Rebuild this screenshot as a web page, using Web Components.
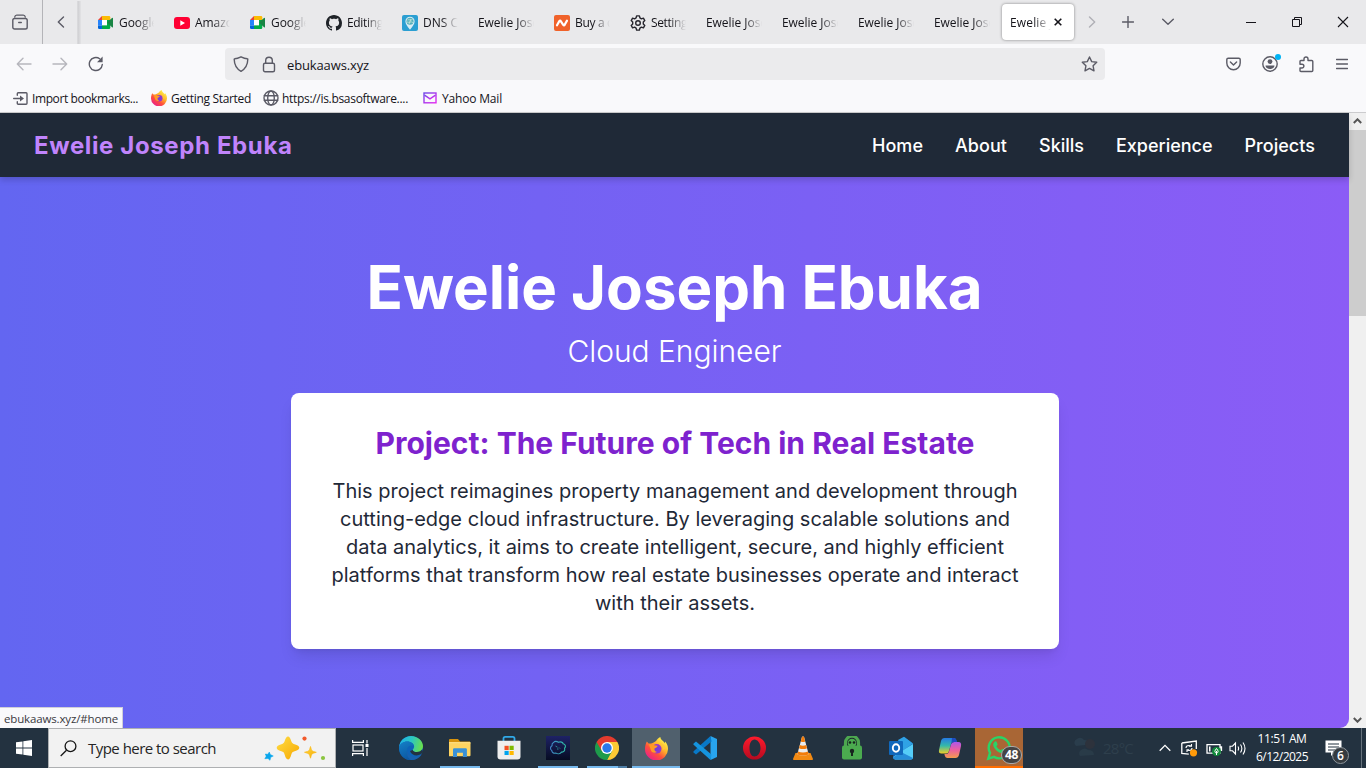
<!DOCTYPE html>
<html lang="en">
<head>
<meta charset="utf-8">
<title>Ewelie Joseph Ebuka</title>
<style>
html,body{margin:0;height:100%;overflow:hidden}
body{font-family:"Open Sans","Noto Sans",sans-serif}
</style>
</head>
<body>
<desktop-screen></desktop-screen>
<script>
const define=(name,html,init)=>{
  const t=document.createElement('template');
  t.innerHTML=html;
  customElements.define(name,class extends HTMLElement{
    constructor(){super();this.attachShadow({mode:'open'}).append(t.content.cloneNode(true));}
    connectedCallback(){if(init)init.call(this,this.shadowRoot);}
  });
};

/* Icons, each as [width, height, markup]. */
const S='fill="none" stroke="#5b5b66" stroke-width="1.4" stroke-linecap="round" stroke-linejoin="round"';
const K='fill="none" stroke="#15141a"';
const ICONS={
 archive:[16,16,`<g ${S}><path d="M2.700 3.200q.3-2 2-2h6.600q1.700 0 2 2" stroke-width="1.300"/><rect x=".8" y="4.500" width="14.400" height="10.500" rx="1.800"/><path d="M6.700 8.500h2.600"/></g>`],
 left:[8,12,`<path d="M6.500 1 1.300 6l5.200 5" ${S}/>`],
 rightdim:[8,12,`<path d="M1.500 1 6.700 6l-5.200 5" ${S} opacity=".4"/>`],
 plus:[12,12,`<path d="M6 .5v11M.5 6h11" ${S}/>`],
 down:[12,8,`<path d="M.7 1.200 6 6.300l5.300-5.100" ${S}/>`],
 min:[10,10,`<path d="M0 5.500h10" ${K}/>`],
 max:[12,12,`<path d="M1.500 3.500h7v7h-7zM3.500 3V1.500h7v7H9" ${K}/>`],
 close:[12,12,`<path d="m1 1 10 10M11 1 1 11" ${K} stroke-width="1.100"/>`],
 tabx:[8,8,`<path d="m.7.7 6.600 6.600M7.300.7.7 7.300" ${K} stroke-width="1.600"/>`],
 back:[16,14,`<path d="M15 7H1.500M7 1.300 1.300 7 7 12.700" ${S} opacity=".42"/>`],
 fwd:[16,14,`<path d="M1 7h13.500M9 1.300 14.700 7 9 12.700" ${S} opacity=".42"/>`],
 reload:[16,16,`<path d="M14.300 8.500A6.500 6.500 0 1 1 11.700 2.800" ${S} stroke-width="1.500"/><path d="M14.600.5v5.700H9z" fill="#5b5b66"/>`],
 shield:[16,16,`<path d="M8 .8c2.500 1.200 4.600 1.800 6.300 1.900.3 0 .5.300.5.600-.1 5.500-1.600 9.200-6.800 12C2.800 12.500 1.300 8.800 1.200 3.300c0-.3.200-.6.500-.6C3.400 2.600 5.500 2 8 .8z" ${S} />`],
 lock:[14,17,`<g ${S}><rect x="1.500" y="7.200" width="11" height="8.600" rx="1.500"/><path d="M3.700 7V4.500a3.300 3.300 0 0 1 6.600 0V7"/></g>`],
 star:[17,16,`<path d="m8.500 1 2.200 4.600 5 .7-3.600 3.500.9 5-4.500-2.400L4 14.800l.9-5L1.300 6.300l5-.7z" ${S}/>`],
 pocket:[15,14,`<g ${S}><path d="M2.200 1.200h10.600q1.400 0 1.400 1.400V6a6.700 6.700 0 0 1-13.400 0V2.600q0-1.400 1.400-1.400z"/><path d="m4.400 5 3.100 3 3.100-3"/></g>`],
 account:[20,20,`<circle cx="9" cy="11" r="7.200" ${S}/><circle cx="9" cy="8.600" r="2.400" fill="#5b5b66"/><path d="M4.500 12.600h9c0 2-2 3.500-4.500 3.500s-4.500-1.500-4.500-3.500z" fill="#5b5b66"/><circle cx="17" cy="4" r="3" fill="#00b3f4"/>`],
 puzzle:[15,17,`<path d="M5 4.500V3a2 2 0 0 1 4 0v1.500h3.800q1 0 1 1v9q0 1-1 1H2q-1 0-1-1V12h2a1.900 1.900 0 0 0 0-3.800H1V5.500q0-1 1-1z" ${S}/>`],
 menu:[12,12,`<path d="M.5 1.500h11M.5 6h11M.5 10.500h11" ${S} stroke-width="1.200"/>`],
 meet:[16,13,`<path d="M4 0h7q1.300 0 1.300 1.300V4H4z" fill="#fbbc04"/><path d="M4 0v4H0z" fill="#ea4335"/><path d="M0 4h4v5.500H0z" fill="#2684fc"/><path d="M0 9.400h4V13H1.300Q0 13 0 11.700z" fill="#0066da"/><path d="M4 9.200h5V4h3.300v7.700q0 1.300-1.300 1.300H4z" fill="#00ac47"/><path d="m9 6.500 5-4.500q1-.8 1 .4v8.400q0 1.200-1 .4z" fill="#198544"/><path d="M4 4h5v5.200H4z" fill="#fff"/>`],
 youtube:[16,12,`<rect width="16" height="12" rx="3" fill="#ff0033"/><path d="M6.300 3.300v5.400L11 6z" fill="#fff"/>`],
 github:[16,16,`<path fill="#1f2328" d="M8 0C3.580 0 0 3.580 0 8c0 3.540 2.290 6.530 5.470 7.590.4.070.55-.17.55-.38 0-.19-.01-.82-.01-1.490-2.010.37-2.530-.49-2.690-.94-.09-.23-.48-.94-.82-1.130-.28-.15-.68-.52-.01-.53.63-.01 1.080.58 1.230.82.72 1.210 1.870.87 2.330.66.070-.52.28-.87.51-1.070-1.780-.2-3.640-.89-3.640-3.950 0-.87.31-1.590.82-2.150-.08-.2-.36-1.020.08-2.120 0 0 .67-.21 2.200.82.64-.18 1.320-.27 2-.27s1.360.09 2 .27c1.530-1.040 2.200-.82 2.200-.82.44 1.100.16 1.920.08 2.120.51.56.82 1.270.82 2.150 0 3.070-1.870 3.750-3.650 3.950.29.25.54.73.54 1.480 0 1.070-.01 1.930-.01 2.200 0 .21.15.46.55.38A8 8 0 0 0 16 8c0-4.420-3.580-8-8-8z"/>`],
 dns:[16,16,`<rect width="16" height="16" rx="2" fill="#2b9fd2"/><path d="M8 14.700C5 11 3.400 9 3.400 6.300a4.600 4.600 0 0 1 9.200 0C12.600 9 11 11 8 14.700z" fill="#d9edf4"/><circle cx="8" cy="6.300" r="3.500" fill="#54aebb"/><path d="M5.500 5c2-1 3 1 5-.5M5 7c2 1 4-1 6 .500M7 9l2-5" stroke="#c7e7d9" fill="none" stroke-width=".8"/>`],
 namecheap:[16,16,`<rect width="16" height="16" rx="2" fill="#f0622a"/><path d="M3 10.300 5.300 6.100q.8-1 1.600.2l2.300 3.600q.8 1 1.500-.1L13 5.600" fill="none" stroke="#fff" stroke-width="2.200" stroke-linecap="round"/>`],
 gear:[16,16,`<g fill="none" stroke="#26252d" stroke-width="1.400" stroke-linejoin="round"><circle cx="8" cy="8" r="2.300"/><path d="m6.600.9-.5 2-1.500.9-2-.6-1.400 2.400L2.700 7v2l-1.500 1.400 1.400 2.400 2-.6 1.500.9.500 2h2.800l.5-2 1.500-.9 2 .6 1.400-2.400L13.300 9V7l1.500-1.400-1.400-2.400-2 .6-1.500-.9-.5-2z"/></g>`],
 import:[15,13,`<g ${S} stroke-width="1.500"><path d="M4.300 3.300V1.700q0-.9.900-.9h7.900q.9 0 .9.900v9.600q0 .9-.9.900H5.200q-.9 0-.9-.9V9.700"/><path d="M.7 6.500h8"/></g><path d="M7 3.500v6l4-3z" fill="#5b5b66"/>`],
 globe:[16,16,`<g ${S} stroke-width="1.200"><circle cx="8" cy="8" r="7"/><ellipse cx="8" cy="8" rx="3.300" ry="7"/><path d="M1.300 5.700h13.400M1.300 10.300h13.400"/></g>`],
 mail:[14,12,`<defs><linearGradient id="m" x2="1" y2="1"><stop stop-color="#7048e8"/><stop offset="1" stop-color="#e42bf0"/></linearGradient></defs><g fill="none" stroke="url(#m)" stroke-width="1.400"><rect x="1" y="1" width="12" height="9.800"/><path d="m1.500 3.200 5.500 3.600 5.500-3.600"/></g>`],
 firefox:[16,16,`<defs><linearGradient id="a" x1=".85" y1=".1" x2=".2" y2=".95"><stop stop-color="#fff44f"/><stop offset=".35" stop-color="#ffb52a"/><stop offset=".65" stop-color="#ff4f3b"/><stop offset="1" stop-color="#e91e8c"/></linearGradient><radialGradient id="b"><stop stop-color="#6b42d9"/><stop offset="1" stop-color="#9a35cc"/></radialGradient></defs><path d="M1.300 3.200 2.500 4.600 4.200 4.500C5.600 4 7.200 3.400 7.800 2.600 8.300 1.600 9.300.7 10.700 0c0 1.800 2 2.600 3.100 4.300l.2-1.200C15.400 4.700 16 6.300 16 8.200A8 8 0 0 1 0 8.500C0 6.500.5 4.500 1.300 3.200z" fill="url(#a)"/><circle cx="8.200" cy="8.200" r="3.300" fill="url(#b)"/><path d="M2.800 5.300c1.600-.6 2.700-.2 3.700.500l2.300.2c-.3 1.200-1.300 1.400-2.100 1.900-.5 1.500.4 2.500 1.600 2.500-2 1.400-4-.1-4.300-1.600z" fill="#ff9b24"/><path d="M10 4c2 1 2.900 3 2.200 5l1.700-.8C14 6 12.500 4.500 10 4z" fill="#ffc63a"/>`],
 windows:[16,16,`<path d="M0 2.300 6.500 1.400v6.200H0zM7.300 1.200 16 0v7.600H7.300zM0 8.400h6.500v6.200L0 13.700zM7.300 8.400H16V16l-8.700-1.200z" fill="#fff"/>`],
 search:[17,17,`<g fill="none" stroke="#161616" stroke-width="1.300"><circle cx="10.500" cy="6.200" r="5.400"/><path d="m6.500 10.200-5.800 5.800"/></g>`],
 sparkles:[62,26,`<defs><linearGradient id="s" x2="1" y2="1"><stop stop-color="#ffdd46"/><stop offset="1" stop-color="#f6a800"/></linearGradient></defs><path d="M24 1.500c1.400 0 2.400 1.500 3.300 4.800.5 1.700 1.300 2.300 3.200 2.900 3.300 1 4.800 2.100 4.800 3.600s-1.500 2.500-4.700 3.500c-2 .6-2.700 1.300-3.300 3.200-.9 3.500-1.900 4.900-3.300 4.900s-2.500-1.500-3.400-4.900c-.5-1.900-1.200-2.600-3.200-3.200-3.300-1-4.700-2-4.700-3.500s1.500-2.600 4.700-3.600c2-.6 2.700-1.200 3.200-2.900.9-3.300 2-4.800 3.400-4.800z" fill="url(#s)"/><path d="M46.500 11.500q.9 3.800 1.500 4.300t4.300 1.500q-3.700 1-4.300 1.600t-1.500 4.300q-1-3.800-1.600-4.300T40.500 17.300q3.800-1 4.400-1.500t1.600-4.300z" fill="url(#s)" stroke="#fbb919" stroke-width=".7"/><path d="m5.300 17 1 2.500 3 1.500-2.600 1.300-.7 3-2-1.800-3.200.2 1.400-2.500-.9-2.200 2.500.300z" fill="#0aa6ec" stroke="#0aa6ec" stroke-width=".5"/><circle cx="40.500" cy="3.600" r="2.100" fill="#f25a2b"/><circle cx="59" cy="23" r="2.100" fill="#8bc53f"/>`],
 taskview:[17,16,`<g fill="none" stroke="#fff" stroke-width="1.200"><rect x="1" y="5" width="10" height="6"/><path d="M.6 0v2.400h10.800V0M.6 16v-2.400h10.800V16M15 0v3.500M15 8v8"/></g><path d="M13.500 4h3v3h-3z" fill="#fff"/>`],
 edge:[24,24,`<defs><linearGradient id="e" x1="0" x2="1" y1=".3" y2=".5"><stop stop-color="#1eb0e9"/><stop offset=".5" stop-color="#2cc7c1"/><stop offset="1" stop-color="#69e04c"/></linearGradient><linearGradient id="f" y2="1" x2=".4"><stop stop-color="#1480c7"/><stop offset="1" stop-color="#0c59a4"/></linearGradient></defs><circle cx="12" cy="12" r="12" fill="#0d63b8"/><path d="M0 11.500C.5 5 5.500 0 12 0c7 0 12 5.200 12 10 0 4-2.900 6-6.200 6-2.300 0-4-.9-4-2.100 0-.9 1.300-1.200 1.300-3.400 0-2.500-3-5-6.800-5C4 5.500 1 8 0 11.500z" fill="url(#e)"/><path d="M0 11.500C1 7.500 4.500 5.500 8.300 5.500c3.800 0 6.800 2.500 6.800 5-5-3-8 1.500-6.900 5.600C9.300 20 12.300 22 15 23.600 6 26 0 19 0 11.500z" fill="url(#f)"/><path d="M8.200 14.500c.3 4 4 6 7.300 6 3 0 5-1.200 6.200-2.100.5-.3.900.2.600.6A12 12 0 0 1 12 24c-2-1-5-4.500-3.800-9.500z" fill="#1761ae"/><path d="M13.800 13.900c0 1.200 1.700 2.100 4 2.100 2.200 0 4.200-.8 5.300-2.500L24 16l-2 2c-3 2.400-9.500 2-11-3z" fill="#233340"/>`],
 explorer:[22,20,`<path d="M1 1h8l2 2.500h10V10H0V2q0-1 1-1z" fill="#d8930c"/><path d="M0 4.200h20.500q1 0 1 1v12q0 1-1 1H0z" fill="#ffd461"/><path d="M4 19v-7.500q0-1.200 1.200-1.200h11.500q1.200 0 1.200 1.200V19h-4v-4.300H8V19z" fill="#3a91d6"/><path d="M0 4.200h21.500v1H0z" fill="#ffe18b"/>`],
 store:[24,24,`<path d="M6.500 5V2.500q0-1.600 1.600-1.600h7.800q1.600 0 1.600 1.600V5" fill="none" stroke="#31a9e8" stroke-width="1.800"/><path d="M.5 4.800h23v15.700q0 3-3 3h-17q-3 0-3-3z" fill="#eee"/><path d="M7.500 9.800h4.200V14H7.500z" fill="#f25022"/><path d="M12.500 9.800h4.200V14h-4.200z" fill="#7fba00"/><path d="M7.500 14.900h4.200V19H7.500z" fill="#00a4ef"/><path d="M12.500 14.900h4.200V19h-4.200z" fill="#ffb900"/>`],
 cloud:[24,24,`<defs><linearGradient id="c" y2="1" x2="0"><stop stop-color="#1e2266"/><stop offset="1" stop-color="#060c22"/></linearGradient><linearGradient id="g" x2="1"><stop stop-color="#4385ca"/><stop offset="1" stop-color="#2dc0a6"/></linearGradient></defs><path d="M0 0h24v24H0z" fill="url(#c)"/><path d="M7.500 6.500c1.500-1.700 3.500-1.200 5-.2 2-1 4.500 0 4.600 1.500 2.500.4 3 3 1.500 4.300.7 2.700-1 4.300-3.100 4-1.500 2-4 2-5.500 1-2.500.6-4.200-.700-4.200-2.500-2.200-1.500-1.300-4 .2-4.800-.2-1.500.3-2.700 1.500-3.300z" fill="none" stroke="url(#g)" stroke-width="1.100"/><path d="m9.500 10 2 1.200M13 11.500l1 1M11 13h1.500" stroke="#2c8e94"/>`],
 chrome:[24,24,`<path d="M12 12V6h10.400A12 12 0 0 1 12 24l4-9z" fill="#fcc934"/><path d="M12 12 1.600 6A12 12 0 0 0 12 24l5.200-9z" fill="#1e9b4b"/><path d="M1.600 6 6.800 15 12 6h10.400A12 12 0 0 0 1.600 6z" fill="#e33b2e"/><circle cx="12" cy="12" r="6" fill="#fff"/><circle cx="12" cy="12" r="4.700" fill="#2979ea"/>`],
 vscode:[24,24,`<path d="M17.500 0v24L24 21V3z" fill="#28a4ee"/><path d="m17.500 0 1 5.500L3 18.500l-2.400-2q-.6-.6 0-1.300z" fill="#0878c7"/><path d="M17.500 24 .6 8.700q-.6-.6 0-1.300L3 5.500l15.500 13z" fill="#1594de"/>`],
 opera:[23,24,`<defs><linearGradient id="o" y2="1" x2="0"><stop stop-color="#ff1b2d"/><stop offset="1" stop-color="#b60a1f"/></linearGradient></defs><path fill="url(#o)" fill-rule="evenodd" d="M11.500.5a11.500 11.500 0 1 1 0 23 11.500 11.500 0 0 1 0-23zM11.500 3.500C8.500 3.500 6.500 7 6.500 12s2 8.500 5 8.500 6-3.500 6-8.500-3-8.500-6-8.500z"/>`],
 vlc:[22,24,`<path d="M3.500 17h15L21 23q.2 1-1 1H2q-1.200 0-1-1z" fill="#f28a13"/><path d="M10 .8q1-.8 2 0l4.700 17.500c-1.800 1.700-9.600 1.700-11.400 0z" fill="#ececec"/><path d="m8.800 5.500 1.200-4.700q1-.8 2 0l1.200 4.700q-2.200 1.100-4.400 0zM7 12.200l.9-3.200q3.100 1.300 6.200 0l.9 3.200q-4 1.800-8 0zM5.300 18.200l.8-2.600q4.900 2 9.800 0l.8 2.600c-2 1.800-9.400 1.800-11.400 0z" fill="#f27c0a"/>`],
 ssh:[20,24,`<path d="M3.500 12V6.700a6.500 6.500 0 0 1 13 0V12" fill="#1b2a2c" stroke="#4da750" stroke-width="3.200"/><rect y="9.500" width="20" height="14" rx="2" fill="#4bab4f"/><circle cx="10" cy="7" r="4.300" fill="#4bab4f"/><circle cx="8" cy="6.500" r="1.300" fill="#17251f"/><circle cx="12" cy="6.500" r="1.300" fill="#17251f"/><circle cx="10" cy="15" r="2.200" fill="#17251f"/><path d="M9 15h2v5H9z" fill="#17251f"/>`],
 outlook:[26,24,`<path d="M6 8 16 .7 25 7.500v14q0 2-2 2H7q-2 0-2-2z" fill="#185da9"/><path d="m10 4 6-3.300 9 6.800-10 7z" fill="#2fa2e5"/><path d="M25 8v13.500q0 2-2 2H7L5 21l12-8z" fill="#55cdf8"/><path d="m13 16 12 6q-1 1.500-3 1.500H7q-2 0-2-2z" fill="#268dd8"/><rect x="1" y="5" width="14" height="14" rx="1" fill="#1068bc"/><ellipse cx="8" cy="12" rx="3.200" ry="3.700" fill="none" stroke="#fff" stroke-width="1.900"/>`],
 copilot:[24,24,`<defs><linearGradient id="p" y2="1" x2="0"><stop stop-color="#257ae5"/><stop offset=".5" stop-color="#34b9a9"/><stop offset="1" stop-color="#f1ce26"/></linearGradient><linearGradient id="q" y2="1" x2="0"><stop stop-color="#ad57ea"/><stop offset=".5" stop-color="#ed609e"/><stop offset="1" stop-color="#f59c4d"/></linearGradient></defs><path d="M6.500 2h9q2 0 2.600 2l.6 2h-3q-2 0-2.700 2l-2 7q-.7 2.500-3 2.500H3.500Q.3 17.500 1 14L3 5q.8-3 3.500-3z" fill="url(#p)"/><path d="M17.500 22h-8q-2 0-2.600-2l-.5-2H8q2.300 0 3-2.500l2-7Q13.700 6 16 6h4.500q3.200 0 2.500 4l-2 9q-.8 3-3.500 3z" fill="url(#q)"/><path d="M14 2h2q2 0 2.500 2l.5 2h-3q-2 0-2.700 1.500z" fill="#1d4cc2"/>`],
 whatsapp:[26,26,`<path d="M2.300 23.700 4 17.800A10.500 10.500 0 1 1 8 21.900z" fill="none" stroke="#2bd366" stroke-width="2.400"/><path d="M8.700 6.700c.8-.8 1.600-.6 1.900.2l1 2.300c.2.700-.9 1.500-1.200 2 1 2 2.600 3.200 4.500 4 .7-.5 1.400-1.700 2-1.400l2.500 1.200c.7 1-.8 3-2.800 3.100-5 0-11-6.500-9-10.200z" fill="#2bd366"/>`],
 chevup:[12,8,`<path d="m.7 6.700 5.300-5.300 5.300 5.300" fill="none" stroke="#fff" stroke-width="1.300"/>`],
 sync:[17,17,`<path d="M.8 3 15.300 1v8M.8 3v10.500l7 .7" fill="none" stroke="#fff" stroke-width="1.300"/><path d="M5 8q0-2.500 3-2.500l2.500.5M10.500 4v2.300H8M11 8q0 2.500-3 2.500l-2-.5M6 12V9.700h2" fill="none" stroke="#fff" stroke-width="1.100"/><circle cx="12.500" cy="12.800" r="3.600" fill="#ff9a0a"/>`],
 battery:[17,15,`<path d="M1 2.700h13v8.500H1zM14.500 5h1v4" fill="none" stroke="#fff" stroke-width="1.300"/><path d="M3 4.500h1.500v5H3z" fill="#fff"/><circle cx="10.500" cy="9.500" r="4.500" fill="#118a3a"/><path d="M10.500 6.500q3.200 3.700 0 4.700-3.200-1 0-4.700zM10.500 9v4" stroke="#fff" fill="none"/>`],
 volume:[18,15,`<g fill="none" stroke="#fff" stroke-width="1.100"><path d="M1 5.200h2.500L6.500 2v11L3.500 9.800H1zM9 5.500q1.200 2 0 4M11.500 3.500q2.700 4 0 8M14 1.500q4 6 0 12"/></g>`],
 notes:[17,17,`<path d="M.5.5h16v12H9.500L6 16v-3.500H.5z" fill="#fff"/><path d="M3 4h11M3 7h11M3 10h7" stroke="#233240" stroke-width="1.100"/>`],
 weather:[24,24,`<path d="M4 10a4 4 0 0 1 1-7q4-3 7 1 6 0 6 4.500z" fill="#2a3d4c"/><circle cx="18" cy="8" r="5" fill="#2d323c"/><path d="M8 20a4 4 0 0 1 1-6q4-3 7 0 6 0 6 5z" fill="#293b48"/>`],
 sup:[9,6,`<path d="M.8 5 4.500 1.300 8.200 5" fill="none" stroke="#555" stroke-width="2"/>`],
 sdown:[9,6,`<path d="M.8 1 4.500 4.700 8.200 1" fill="none" stroke="#555" stroke-width="2"/>`]
};
define('ui-icon',`<style>:host{display:block;flex:none}svg{display:block}</style><slot></slot>`,function(r){
  const [w,h,m]=ICONS[this.getAttribute('name')];
  const sw=+this.getAttribute('size')||w, sh=this.hasAttribute('size')?sw*h/w:h;
  r.innerHTML=`<style>:host{display:block;flex:none}svg{display:block}</style><svg width="${sw}" height="${sh}" viewBox="0 0 ${w} ${h}">${m}</svg>`;
});

/* One line of text whose letter spacing is tuned to a given line width. */
define('fit-text',`<style>:host{display:block;white-space:nowrap;flex:none}span{display:inline-block}</style><span><slot></slot></span>`,function(r){
  const s=r.querySelector('span'),w=+this.getAttribute('w');
  s.style.letterSpacing='0px';
  const n=this.textContent.length,nat=s.getBoundingClientRect().width;
  s.style.letterSpacing=((w-nat)/n)+'px';
  this.style.width=w+'px';
});

define('browser-tab',`<style>
:host{display:flex;align-items:center;box-sizing:border-box;width:76px;height:44px;padding:1px 12px 0 8px;color:#15141a;font-size:12px;flex:none}
:host([active]){width:72px;height:36px;margin:4px 0 4px;padding:0 12px 0 8px;background:#fff;border-radius:4px;box-shadow:0 0 3px rgba(0,0,0,.45)}
.t{flex:1;overflow:hidden;-webkit-mask:linear-gradient(to left,transparent 0,#000 17px);mask:linear-gradient(to left,transparent 0,#000 17px)}
ui-icon{width:16px;display:grid;place-items:center;margin-right:5px}
ui-icon.x{width:8px;margin:0 0 0 3px}
</style><div class="t"></div>`,function(r){
  const ic=this.getAttribute('icon'),t=this.getAttribute('label');
  r.querySelector('.t').innerHTML=`<fit-text w="${this.getAttribute('w')}">${t}</fit-text>`;
  if(ic)r.querySelector('.t').insertAdjacentHTML('beforebegin',`<ui-icon name="${ic}"></ui-icon>`);
  if(this.hasAttribute('active'))r.querySelector('.t').insertAdjacentHTML('afterend',`<ui-icon class="x" name="tabx"></ui-icon>`);
});

define('tab-strip',`<style>
:host{display:flex;align-items:center;height:44px;background:#e9e9eb}
.a{width:42px;height:44px;border-right:1px solid #b4b4b8;display:grid;place-items:center;box-sizing:content-box}
.a ui-icon{margin-right:2px}
.b{width:34px;height:44px;display:grid;place-items:center}
.b ui-icon{margin-left:2px}
.s{width:4px;height:43px;background:linear-gradient(90deg,#dcdcde,#d2d2d5 40%,#e4e4e6)}
.tabs{display:flex;margin-left:9px}
.end{display:flex;flex:1;align-items:center}
</style>
<div class="a"><ui-icon name="archive"></ui-icon></div><div class="b"><ui-icon name="left"></ui-icon></div><div class="s"></div>
<div class="tabs">
<browser-tab icon="meet" label="Google" w="39"></browser-tab><browser-tab icon="youtube" label="Amazo" w="38"></browser-tab><browser-tab icon="meet" label="Google" w="39"></browser-tab><browser-tab icon="github" label="Editing" w="36"></browser-tab><browser-tab icon="dns" label="DNS C" w="35"></browser-tab><browser-tab label="Ewelie Jose" w="61"></browser-tab><browser-tab icon="namecheap" label="Buy a d" w="39"></browser-tab><browser-tab icon="gear" label="Setting" w="36"></browser-tab><browser-tab label="Ewelie Jose" w="61"></browser-tab><browser-tab label="Ewelie Jose" w="61"></browser-tab><browser-tab label="Ewelie Jose" w="61"></browser-tab><browser-tab label="Ewelie Jose" w="61"></browser-tab><browser-tab active label="Ewelie J" w="43"></browser-tab>
</div>
<div class="end"><ui-icon name="rightdim" style="margin-left:14px"></ui-icon><ui-icon name="plus" style="margin-left:26px"></ui-icon><ui-icon name="down" style="margin-left:28px"></ui-icon><ui-icon name="min" style="margin-left:72px"></ui-icon><ui-icon name="max" style="margin-left:35px"></ui-icon><ui-icon name="close" style="margin-left:34px"></ui-icon></div>`);

define('nav-bar',`<style>
:host{display:flex;align-items:center;height:40px;background:#f9f9fb;color:#15141a}
.u{display:flex;align-items:center;width:880px;height:32px;margin-left:121px;background:#ebebed;border-radius:4px;box-sizing:border-box;padding:0 8px}
fit-text{font-size:13px;margin-left:11px;margin-top:2px}
.u ui-icon:last-child{margin-left:auto;margin-right:-1px}
</style>
<ui-icon name="back" style="margin-left:16px"></ui-icon><ui-icon name="fwd" style="margin-left:20px"></ui-icon><ui-icon name="reload" style="margin-left:20px"></ui-icon>
<div class="u"><ui-icon name="shield"></ui-icon><ui-icon name="lock" style="margin-left:13px"></ui-icon><fit-text w="82">ebukaaws.xyz</fit-text><ui-icon name="star"></ui-icon></div>
<ui-icon name="pocket" style="margin-left:121px"></ui-icon><ui-icon name="account" style="margin:-3px 0 0 20px"></ui-icon><ui-icon name="puzzle" style="margin-left:18px"></ui-icon><ui-icon name="menu" style="margin-left:22px"></ui-icon>`);

define('bookmark-item',`<style>:host{display:flex;align-items:center;gap:4px;font-size:12px;color:#15141a}</style><slot></slot>`);
define('bookmarks-bar',`<style>:host{display:flex;align-items:center;height:28px;padding-left:13px;background:#f9f9fb;border-bottom:1px solid #ccccce;box-sizing:content-box}</style>
<bookmark-item><ui-icon name="import"></ui-icon><fit-text w="106">Import bookmarks...</fit-text></bookmark-item>
<bookmark-item style="margin-left:13px;gap:4px"><ui-icon name="firefox"></ui-icon><fit-text w="80">Getting Started</fit-text></bookmark-item>
<bookmark-item style="margin-left:12px;gap:3px"><ui-icon name="globe"></ui-icon><fit-text w="126">https://is.bsasoftware....</fit-text></bookmark-item>
<bookmark-item style="margin-left:15px;gap:5px"><ui-icon name="mail"></ui-icon><fit-text w="60">Yahoo Mail</fit-text></bookmark-item>`);

define('site-header',`<style>
:host{display:flex;align-items:center;justify-content:space-between;height:64px;box-sizing:border-box;padding:0 34px;background:#1f2937;color:#fff;font-size:18px;font-weight:500;position:relative;box-shadow:0 3px 6px rgba(0,0,0,.17)}
.n{font-size:24px;font-weight:700;color:#c084fc}
nav{display:flex;gap:32px;padding-top:1px}
</style><fit-text class="n" w="258.500">Ewelie Joseph Ebuka</fit-text>
<nav><fit-text w="51">Home</fit-text><fit-text w="52">About</fit-text><fit-text w="45">Skills</fit-text><fit-text w="96.500">Experience</fit-text><fit-text w="70.500">Projects</fit-text></nav>`);

define('project-card',`<style>
:host{display:flex;flex-direction:column;align-items:center;box-sizing:border-box;width:768px;height:256px;margin-top:24px;padding:32px 31px 32px 32px;background:#fff;border-radius:8px;box-shadow:0 10px 15px -3px rgba(0,0,0,.1),0 4px 6px -4px rgba(0,0,0,.1);color:#1f2937;font-size:20px;line-height:28px}
.t{font-size:30px;line-height:36px;font-weight:700;color:#7e22ce;margin-bottom:16px}
</style><fit-text class="t" w="599">Project: The Future of Tech in Real Estate</fit-text>
<fit-text w="685">This project reimagines property management and development through</fit-text>
<fit-text w="670">cutting-edge cloud infrastructure. By leveraging scalable solutions and</fit-text>
<fit-text w="658">data analytics, it aims to create intelligent, secure, and highly efficient</fit-text>
<fit-text w="687">platforms that transform how real estate businesses operate and interact</fit-text>
<fit-text w="160">with their assets.</fit-text>`);

define('hero-section',`<style>
:host{display:flex;flex-direction:column;align-items:center;box-sizing:border-box;height:551px;padding-top:80px;background:linear-gradient(90deg,#6366f1,#8b5cf6);border-bottom-right-radius:9px;color:#fff}
.h{font-size:60px;line-height:60px;font-weight:700}
.s{font-size:30px;line-height:36px;font-weight:300;margin-top:16px}
</style><fit-text class="h" w="616">Ewelie Joseph Ebuka</fit-text><fit-text class="s" w="214">Cloud Engineer</fit-text><project-card></project-card>`);

define('scroll-rail',`<style>
:host{display:flex;flex-direction:column;align-items:center;width:17px;background:#f0f0f0}
ui-icon{margin:5px 0 6px}
i{display:block;width:17px;height:186px;background:#cdcdcd}
ui-icon:last-child{margin-top:auto;margin-bottom:5px}
</style><ui-icon name="sup"></ui-icon><i></i><ui-icon name="sdown"></ui-icon>`);

define('status-tip',`<style>:host{position:absolute;left:0;bottom:0;box-sizing:border-box;width:123px;height:21px;padding:2px 0 0 4px;background:#f9f9fb;border:1px solid #cfcfd8;border-width:1px 1px 0 0;color:#38383d;font-size:11.500px;line-height:18px}</style><fit-text w="114">ebukaaws.xyz/#home</fit-text>`);

define('web-page',`<style>:host{display:grid;grid-template-columns:1349px 17px;height:615px;background:#f0f0f0;position:relative;font-family:Inter,sans-serif}status-tip{font-family:"Open Sans",sans-serif}</style>
<main><site-header></site-header><hero-section></hero-section></main><scroll-rail></scroll-rail><status-tip></status-tip>`);

define('task-button',`<style>
:host{display:grid;place-items:center;position:relative;width:48px;height:40px;box-sizing:border-box;flex:none}
:host([active]){background:#50606d}
:host([alert]){background:linear-gradient(#ff6d00,#ff6d00) 0 100%/100% 2px no-repeat #a96635}
:host([run])::after{content:"";position:absolute;bottom:0;left:4px;right:4px;height:2px;background:#76b9ed}
:host([run][active])::after{left:0;right:0}
:host([multi])::after{background:linear-gradient(90deg,#76b9ed 31px,#4d7da5 31px)!important}
.badge{position:absolute;left:26px;top:18px;box-sizing:border-box;width:21px;height:18px;border:1px solid #aaa;border-radius:9px;background:#454545;color:#fff;font-size:12px;font-weight:700;line-height:16px;text-align:center;letter-spacing:-.4px}
</style><ui-icon name="edge"></ui-icon>`,function(r){
  const i=document.createElement('ui-icon');i.setAttribute('name',this.getAttribute('icon'));
  if(this.getAttribute('size'))i.setAttribute('size',this.getAttribute('size'));
  r.querySelector('ui-icon').replaceWith(i);
  if(this.hasAttribute('alert'))i.insertAdjacentHTML('afterend',`<span class="badge">${this.getAttribute('alert')}</span>`);
});

define('system-tray',`<style>
:host{display:flex;align-items:center;flex:1;color:#fff;font-size:12px}
.w{display:flex;align-items:center;gap:7px;margin-left:49px;color:#2e3f4c;font-size:15px}
.c{display:flex;flex-direction:column;align-items:center;width:54px;margin-left:8px;line-height:18px}
.n{position:relative;margin-left:16px}
.n b{position:absolute;left:7px;top:7px;width:17px;height:17px;box-sizing:border-box;border:1px solid #8d959b;border-radius:50%;background:#353b40;font:600 12px/15px "Open Sans",sans-serif;text-align:center}
hr{width:1px;height:40px;margin:0 4px 0 auto;border:0;background:#66727c}
</style>
<div class="w"><ui-icon name="weather"></ui-icon><fit-text w="30">28°C</fit-text></div>
<ui-icon name="chevup" style="margin-left:26px"></ui-icon><ui-icon name="sync" style="margin-left:10px"></ui-icon><ui-icon name="battery" style="margin-left:8px;margin-top:3px"></ui-icon><ui-icon name="volume" style="margin-left:6px"></ui-icon>
<div class="c"><fit-text w="49">11:51 AM</fit-text><fit-text w="52">6/12/2025</fit-text></div>
<div class="n"><ui-icon name="notes"></ui-icon><b>6</b></div><hr>`);

define('task-bar',`<style>
:host{display:flex;height:40px;background:#233240}
.s{display:flex;align-items:center;box-sizing:border-box;width:288px;height:40px;background:#f2f2f2;border:1px solid #aeb0b2;padding:0 9px 0 11px;color:#252525}
.s fit-text{font-size:15px;margin-left:11px}
.s .k{margin-left:auto}
.apps{display:flex;gap:1px}
.apps task-button:first-child{margin-right:2px}
</style>
<task-button icon="windows"></task-button>
<div class="s"><ui-icon name="search"></ui-icon><fit-text w="128">Type here to search</fit-text><ui-icon class="k" name="sparkles"></ui-icon></div>
<div class="apps"><task-button icon="taskview"></task-button><task-button icon="edge"></task-button><task-button icon="explorer" run></task-button><task-button icon="store"></task-button><task-button icon="cloud" run></task-button><task-button icon="chrome" run multi></task-button><task-button icon="firefox" size="23" run active></task-button><task-button icon="vscode"></task-button><task-button icon="opera"></task-button><task-button icon="vlc"></task-button><task-button icon="ssh"></task-button><task-button icon="outlook"></task-button><task-button icon="copilot"></task-button><task-button icon="whatsapp" alert="48"></task-button></div>
<system-tray></system-tray>`);

define('desktop-screen',`<style>:host{display:flex;flex-direction:column;width:1366px;height:768px;overflow:hidden}</style>
<tab-strip></tab-strip><nav-bar></nav-bar><bookmarks-bar></bookmarks-bar><web-page></web-page><task-bar></task-bar>`);
</script>
</body>
</html>
